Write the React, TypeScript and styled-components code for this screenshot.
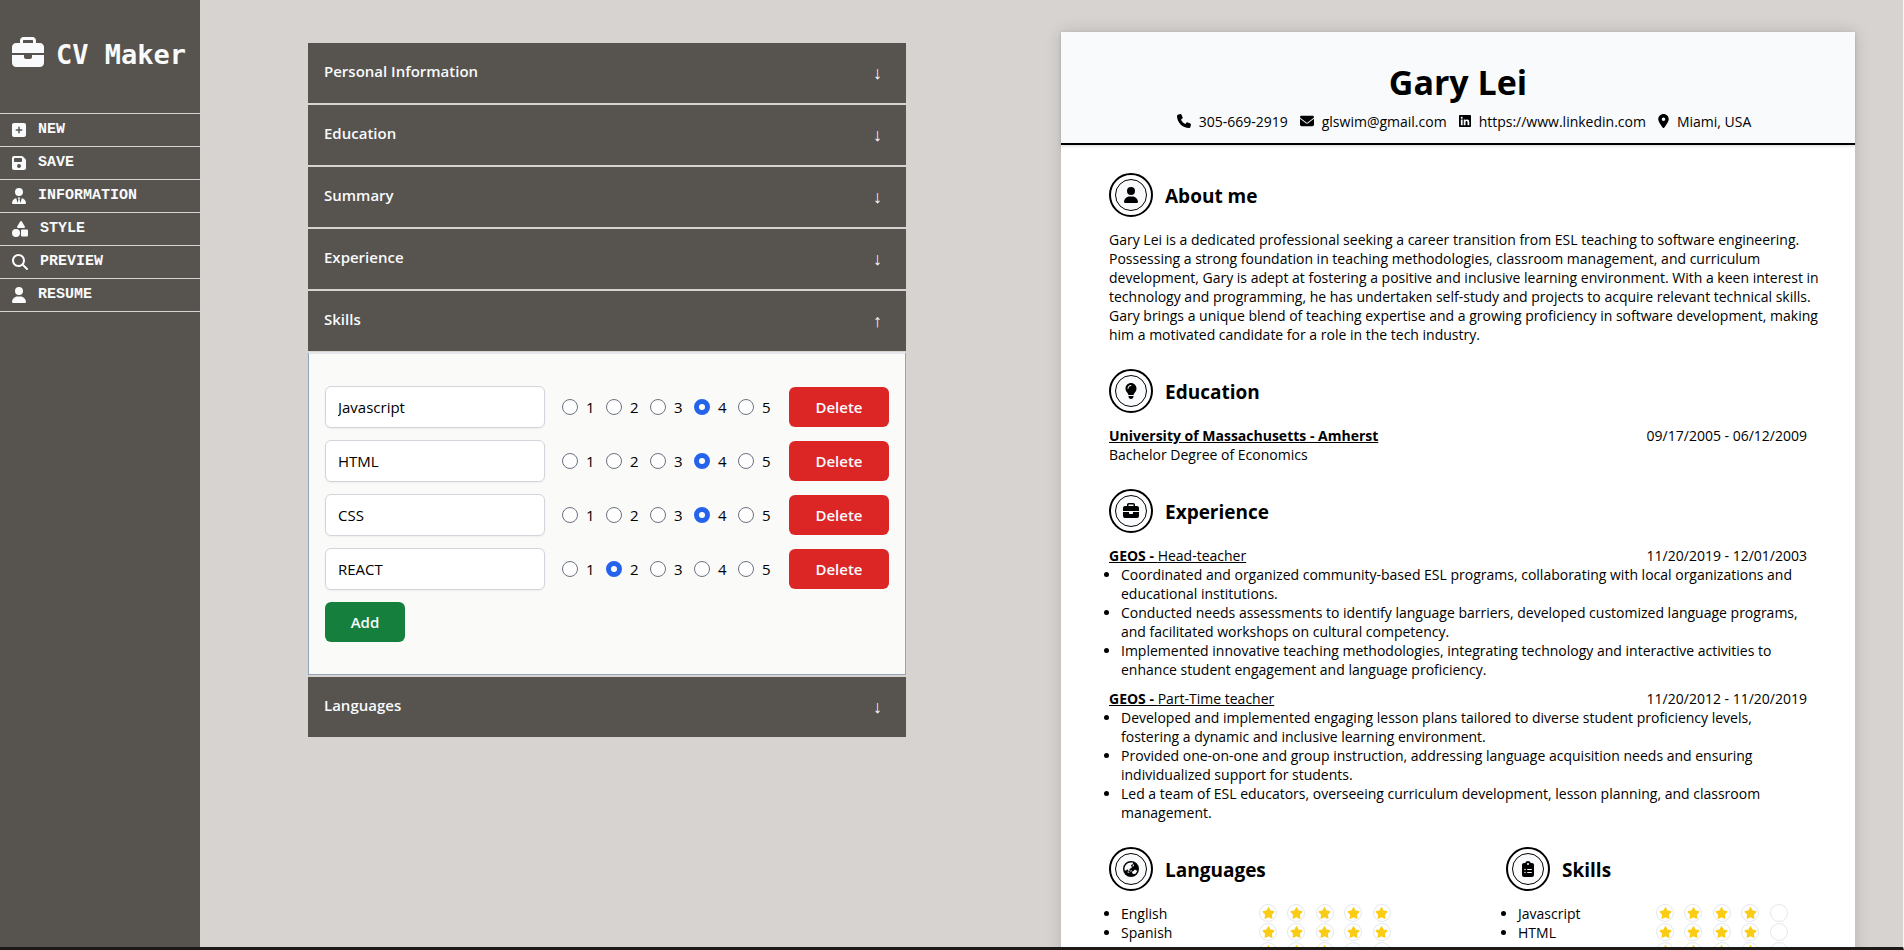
import React, { useState } from "react";
import styled, { createGlobalStyle } from "styled-components";
import {
  FaBriefcase,
  FaEarthAsia,
  FaEnvelope,
  FaFloppyDisk,
  FaLightbulb,
  FaLinkedin,
  FaLocationDot,
  FaMagnifyingGlass,
  FaPhone,
  FaClipboardList,
  FaShapes,
  FaSquarePlus,
  FaStar,
  FaUser,
  FaUserTie,
} from "react-icons/fa6";

const GlobalStyle = createGlobalStyle`
  *, *::before, *::after { box-sizing: border-box; }
  body {
    margin: 0;
    background: #d6d3d1;
    color: #000;
    font-family: "Open Sans", "Noto Sans", sans-serif;
    font-size: 15px;
    line-height: 24px;
  }
  h1, h2, h3, p, ul { margin: 0; padding: 0; }
  button, input { font: inherit; }
`;

const Page = styled.div`
  display: flex;
  height: 100vh;
  overflow: hidden;
  border-right: 1px solid #f5f5f4;
  border-bottom: 3px solid #1c1917;
`;

/* Sidebar */

const Sidebar = styled.aside`
  flex: 0 0 200px;
  background: #57534e;
  color: #f8fafc;
`;

const Brand = styled.h1`
  display: flex;
  align-items: center;
  gap: 12px;
  height: 113px;
  padding: 0 12px 8px;
  font-family: "DejaVu Sans Mono", monospace;
  font-size: 27px;
  line-height: 36px;
  white-space: nowrap;

  svg {
    flex: none;
    width: 32px;
    height: 32px;
  }
`;

const BrandName = styled.span`
  padding-top: 4px;
`;

const Menu = styled.ul`
  list-style: none;
  border-top: 1px solid #d6d3d1;
`;

const MenuButton = styled.button<{ $iconWidth: number }>`
  display: flex;
  align-items: center;
  gap: 12px;
  width: 100%;
  height: 33px;
  padding: 0 12px;
  border: 0;
  border-bottom: 1px solid #d6d3d1;
  background: none;
  color: inherit;
  font-family: "Liberation Mono", monospace;
  font-size: 15px;
  font-weight: 700;
  cursor: pointer;

  svg {
    flex: none;
    width: ${(p) => p.$iconWidth}px;
    height: 16px;
  }
`;

/* Form */

const FormColumn = styled.main`
  flex: 1;
  min-width: 0;
  padding: 43px 108px;
`;

const Accordion = styled.div`
  display: flex;
  flex-direction: column;
  gap: 2px;
`;

const AccordionHeader = styled.button`
  display: flex;
  align-items: center;
  justify-content: space-between;
  width: 100%;
  height: 60px;
  padding: 0 24px 4px 16px;
  border: 0;
  background: #57534e;
  color: #f8fafc;
  font-weight: 600;
  cursor: pointer;
`;

const Arrow = styled.span`
  padding-top: 4px;
  font-family: "Liberation Sans", sans-serif;
  font-size: 18px;
  font-weight: 400;
`;

const Panel = styled.div`
  display: flex;
  flex-direction: column;
  gap: 12px;
  margin-top: 1px;
  padding: 32px 16px;
  border: 1px solid #94a3b8;
  border-top: 2px solid #e5e7eb;
  background: #fafaf9;
`;

const SkillRow = styled.div`
  display: flex;
  align-items: center;
  gap: 12px;
`;

const SkillInput = styled.input`
  flex: 1;
  min-width: 0;
  height: 42px;
  padding: 0 12px;
  border: 1px solid #d1d5db;
  border-radius: 6px;
  background: #fff;
  box-shadow: 0 1px 2px rgba(0, 0, 0, 0.05);
  color: #000;
`;

const Levels = styled.div`
  display: flex;
`;

const LevelLabel = styled.label`
  display: flex;
  align-items: center;
  gap: 8px;
  width: 44px;
  padding-left: 5px;
`;

const Radio = styled.input`
  appearance: none;
  width: 16px;
  height: 16px;
  margin: 0;
  border: 1px solid #6b7280;
  border-radius: 50%;
  background: #fff;

  &:checked {
    border: 5px solid #2563eb;
  }
`;

const ActionButton = styled.button<{ $tone: "danger" | "success" }>`
  width: ${(p) => (p.$tone === "danger" ? "100px" : "80px")};
  height: 40px;
  padding: 0;
  border: 0;
  border-radius: 6px;
  background: ${(p) => (p.$tone === "danger" ? "#dc2626" : "#15803d")};
  color: #f8fafc;
  font-weight: 600;
  cursor: pointer;
`;

/* Resume */

const PreviewColumn = styled.section`
  flex: 0 0 889px;
  padding: 32px 48px 0 47px;
`;

const Sheet = styled.article`
  min-height: 1123px;
  background: #fff;
  box-shadow: 0 0 15px rgba(0, 0, 0, 0.15);
  font-size: 14px;
  line-height: 19px;
`;

const SheetHeader = styled.header`
  display: flex;
  flex-direction: column;
  align-items: center;
  gap: 10px;
  padding: 30px 48px 11px;
  border-bottom: 2px solid #000;
  background: #f8fafc;
  box-shadow: 0 1px 3px rgba(0, 0, 0, 0.15);
`;

const FullName = styled.h1`
  font-size: 34px;
  font-weight: 700;
  line-height: 40px;
`;

const Contacts = styled.address`
  display: flex;
  gap: 12px;
  padding-left: 12px;
  font-style: normal;
  line-height: 20px;
`;

const Contact = styled.span<{ $iconWidth: number }>`
  display: flex;
  gap: 8px;

  svg {
    flex: none;
    width: ${(p) => p.$iconWidth}px;
    height: 14px;
    margin-top: 2px;
  }
`;

const SheetBody = styled.div`
  display: flex;
  flex-direction: column;
  gap: 25px;
  padding: 28px 48px;
`;

const SectionHeading = styled.div`
  display: flex;
  align-items: center;
  gap: 12px;
  margin-bottom: 13px;
`;

const Badge = styled.span`
  display: grid;
  place-items: center;
  width: 44px;
  height: 44px;
  padding: 4px;
  border: 2px solid #000;
  border-radius: 50%;
`;

const BadgeInner = styled.span`
  display: grid;
  place-items: center;
  width: 32px;
  height: 32px;
  border: 1px solid #000;
  border-radius: 50%;
  background: #f8fafc;

  svg {
    width: auto;
    height: 16px;
  }
`;

const SectionTitle = styled.h2`
  padding-top: 2px;
  font-size: 19px;
  font-weight: 700;
  line-height: 28px;
`;

const Summary = styled.p`
  margin-right: -20px;
`;

const EntryHead = styled.div`
  display: flex;
  justify-content: space-between;
`;

const EntryTitle = styled.h3`
  font-size: 14px;
  font-weight: 400;
  text-decoration: underline;
`;

const Entry = styled.div`
  & + & {
    margin-top: 10px;
  }
`;

const Bullets = styled.ul`
  padding-left: 12px;
`;

const Halves = styled.div`
  display: grid;
  grid-template-columns: 1fr 1fr;
  gap: 96px;
`;

const RatingList = styled.ul`
  padding-left: 12px;
`;

const RatingRow = styled.div`
  display: flex;
  justify-content: space-between;
  padding-right: 9px;
`;

const Stars = styled.span`
  display: grid;
  grid-template-columns: repeat(5, 1fr);
  width: 142px;
`;

const StarCell = styled.span`
  display: grid;
  place-items: center;
  width: 18px;
  height: 18px;
  border: 1px solid #e5e7eb;
  border-radius: 50%;
  color: #facc15;

  svg {
    width: 13px;
    height: 12px;
  }
`;

const menu = [
  { label: "NEW", icon: <FaSquarePlus />, iconWidth: 14 },
  { label: "SAVE", icon: <FaFloppyDisk />, iconWidth: 14 },
  { label: "INFORMATION", icon: <FaUserTie />, iconWidth: 14 },
  { label: "STYLE", icon: <FaShapes />, iconWidth: 16 },
  { label: "PREVIEW", icon: <FaMagnifyingGlass />, iconWidth: 16 },
  { label: "RESUME", icon: <FaUser />, iconWidth: 14 },
];

const sections = [
  "Personal Information",
  "Education",
  "Summary",
  "Experience",
  "Skills",
  "Languages",
];

const contacts = [
  { text: "305-669-2919", icon: <FaPhone />, iconWidth: 14 },
  { text: "glswim@gmail.com", icon: <FaEnvelope />, iconWidth: 14 },
  { text: "https://www.linkedin.com", icon: <FaLinkedin />, iconWidth: 12 },
  { text: "Miami, USA", icon: <FaLocationDot />, iconWidth: 11 },
];

const jobs = [
  {
    role: "Head-teacher",
    dates: "11/20/2019 - 12/01/2003",
    points: [
      "Coordinated and organized community-based ESL programs, collaborating with local organizations and educational institutions.",
      "Conducted needs assessments to identify language barriers, developed customized language programs, and facilitated workshops on cultural competency.",
      "Implemented innovative teaching methodologies, integrating technology and interactive activities to enhance student engagement and language proficiency.",
    ],
  },
  {
    role: "Part-Time teacher",
    dates: "11/20/2012 - 11/20/2019",
    points: [
      "Developed and implemented engaging lesson plans tailored to diverse student proficiency levels, fostering a dynamic and inclusive learning environment.",
      "Provided one-on-one and group instruction, addressing language acquisition needs and ensuring individualized support for students.",
      "Led a team of ESL educators, overseeing curriculum development, lesson planning, and classroom management.",
    ],
  },
];

const languages = [
  { name: "English", level: 5 },
  { name: "Spanish", level: 5 },
  { name: "", level: 3 },
];

type Skill = { name: string; level: number };

const initialSkills: Skill[] = [
  { name: "Javascript", level: 4 },
  { name: "HTML", level: 4 },
  { name: "CSS", level: 4 },
  { name: "REACT", level: 2 },
];

function Heading({ icon, title }: { icon: React.ReactNode; title: string }) {
  return (
    <SectionHeading>
      <Badge>
        <BadgeInner>{icon}</BadgeInner>
      </Badge>
      <SectionTitle>{title}</SectionTitle>
    </SectionHeading>
  );
}

function Ratings({ items }: { items: Skill[] }) {
  return (
    <RatingList>
      {items.map((item, i) => (
        <li key={i}>
          <RatingRow>
            <span>{item.name}</span>
            <Stars>
              {[1, 2, 3, 4, 5].map((n) => (
                <StarCell key={n}>{n <= item.level && <FaStar />}</StarCell>
              ))}
            </Stars>
          </RatingRow>
        </li>
      ))}
    </RatingList>
  );
}

export default function App() {
  const [open, setOpen] = useState("Skills");
  const [skills, setSkills] = useState(initialSkills);

  const update = (index: number, change: Partial<Skill>) =>
    setSkills(skills.map((s, i) => (i === index ? { ...s, ...change } : s)));

  return (
    <Page>
      <GlobalStyle />
      <Sidebar>
        <Brand>
          <FaBriefcase />
          <BrandName>CV Maker</BrandName>
        </Brand>
        <nav>
          <Menu>
            {menu.map((item) => (
              <li key={item.label}>
                <MenuButton type="button" $iconWidth={item.iconWidth}>
                  {item.icon}
                  {item.label}
                </MenuButton>
              </li>
            ))}
          </Menu>
        </nav>
      </Sidebar>

      <FormColumn>
        <Accordion>
          {sections.map((name) => (
            <div key={name}>
              <AccordionHeader
                type="button"
                aria-expanded={open === name}
                onClick={() => setOpen(open === name ? "" : name)}
              >
                {name}
                <Arrow>{open === name ? "↑" : "↓"}</Arrow>
              </AccordionHeader>
              {name === "Skills" && open === name && (
                <Panel>
                  {skills.map((skill, i) => (
                    <SkillRow key={i}>
                      <SkillInput
                        aria-label={`Skill ${i + 1}`}
                        value={skill.name}
                        onChange={(e) => update(i, { name: e.target.value })}
                      />
                      <Levels role="radiogroup" aria-label={`Level ${i + 1}`}>
                        {[1, 2, 3, 4, 5].map((n) => (
                          <LevelLabel key={n}>
                            <Radio
                              type="radio"
                              name={`level-${i}`}
                              checked={skill.level === n}
                              onChange={() => update(i, { level: n })}
                            />
                            {n}
                          </LevelLabel>
                        ))}
                      </Levels>
                      <ActionButton
                        type="button"
                        $tone="danger"
                        onClick={() => setSkills(skills.filter((_, k) => k !== i))}
                      >
                        Delete
                      </ActionButton>
                    </SkillRow>
                  ))}
                  <ActionButton
                    type="button"
                    $tone="success"
                    onClick={() => setSkills([...skills, { name: "", level: 1 }])}
                  >
                    Add
                  </ActionButton>
                </Panel>
              )}
            </div>
          ))}
        </Accordion>
      </FormColumn>

      <PreviewColumn>
        <Sheet>
          <SheetHeader>
            <FullName>Gary Lei</FullName>
            <Contacts>
              {contacts.map((c) => (
                <Contact key={c.text} $iconWidth={c.iconWidth}>
                  {c.icon}
                  {c.text}
                </Contact>
              ))}
            </Contacts>
          </SheetHeader>
          <SheetBody>
            <section>
              <Heading icon={<FaUser />} title="About me" />
              <Summary>
                Gary Lei is a dedicated professional seeking a career transition from ESL
                teaching to software engineering. Possessing a strong foundation in teaching
                methodologies, classroom management, and curriculum development, Gary is adept
                at fostering a positive and inclusive learning environment. With a keen
                interest in technology and programming, he has undertaken self-study and
                projects to acquire relevant technical skills. Gary brings a unique blend of
                teaching expertise and a growing proficiency in software development, making
                him a motivated candidate for a role in the tech industry.
              </Summary>
            </section>
            <section>
              <Heading icon={<FaLightbulb />} title="Education" />
              <EntryHead>
                <EntryTitle>
                  <b>University of Massachusetts - Amherst</b>
                </EntryTitle>
                <span>09/17/2005 - 06/12/2009</span>
              </EntryHead>
              <p>Bachelor Degree of Economics</p>
            </section>
            <section>
              <Heading icon={<FaBriefcase />} title="Experience" />
              {jobs.map((job) => (
                <Entry key={job.role}>
                  <EntryHead>
                    <EntryTitle>
                      <b>GEOS - </b>
                      {job.role}
                    </EntryTitle>
                    <span>{job.dates}</span>
                  </EntryHead>
                  <Bullets>
                    {job.points.map((point) => (
                      <li key={point}>{point}</li>
                    ))}
                  </Bullets>
                </Entry>
              ))}
            </section>
            <Halves>
              <section>
                <Heading icon={<FaEarthAsia />} title="Languages" />
                <Ratings items={languages} />
              </section>
              <section>
                <Heading icon={<FaClipboardList />} title="Skills" />
                <Ratings items={skills} />
              </section>
            </Halves>
          </SheetBody>
        </Sheet>
      </PreviewColumn>
    </Page>
  );
}
